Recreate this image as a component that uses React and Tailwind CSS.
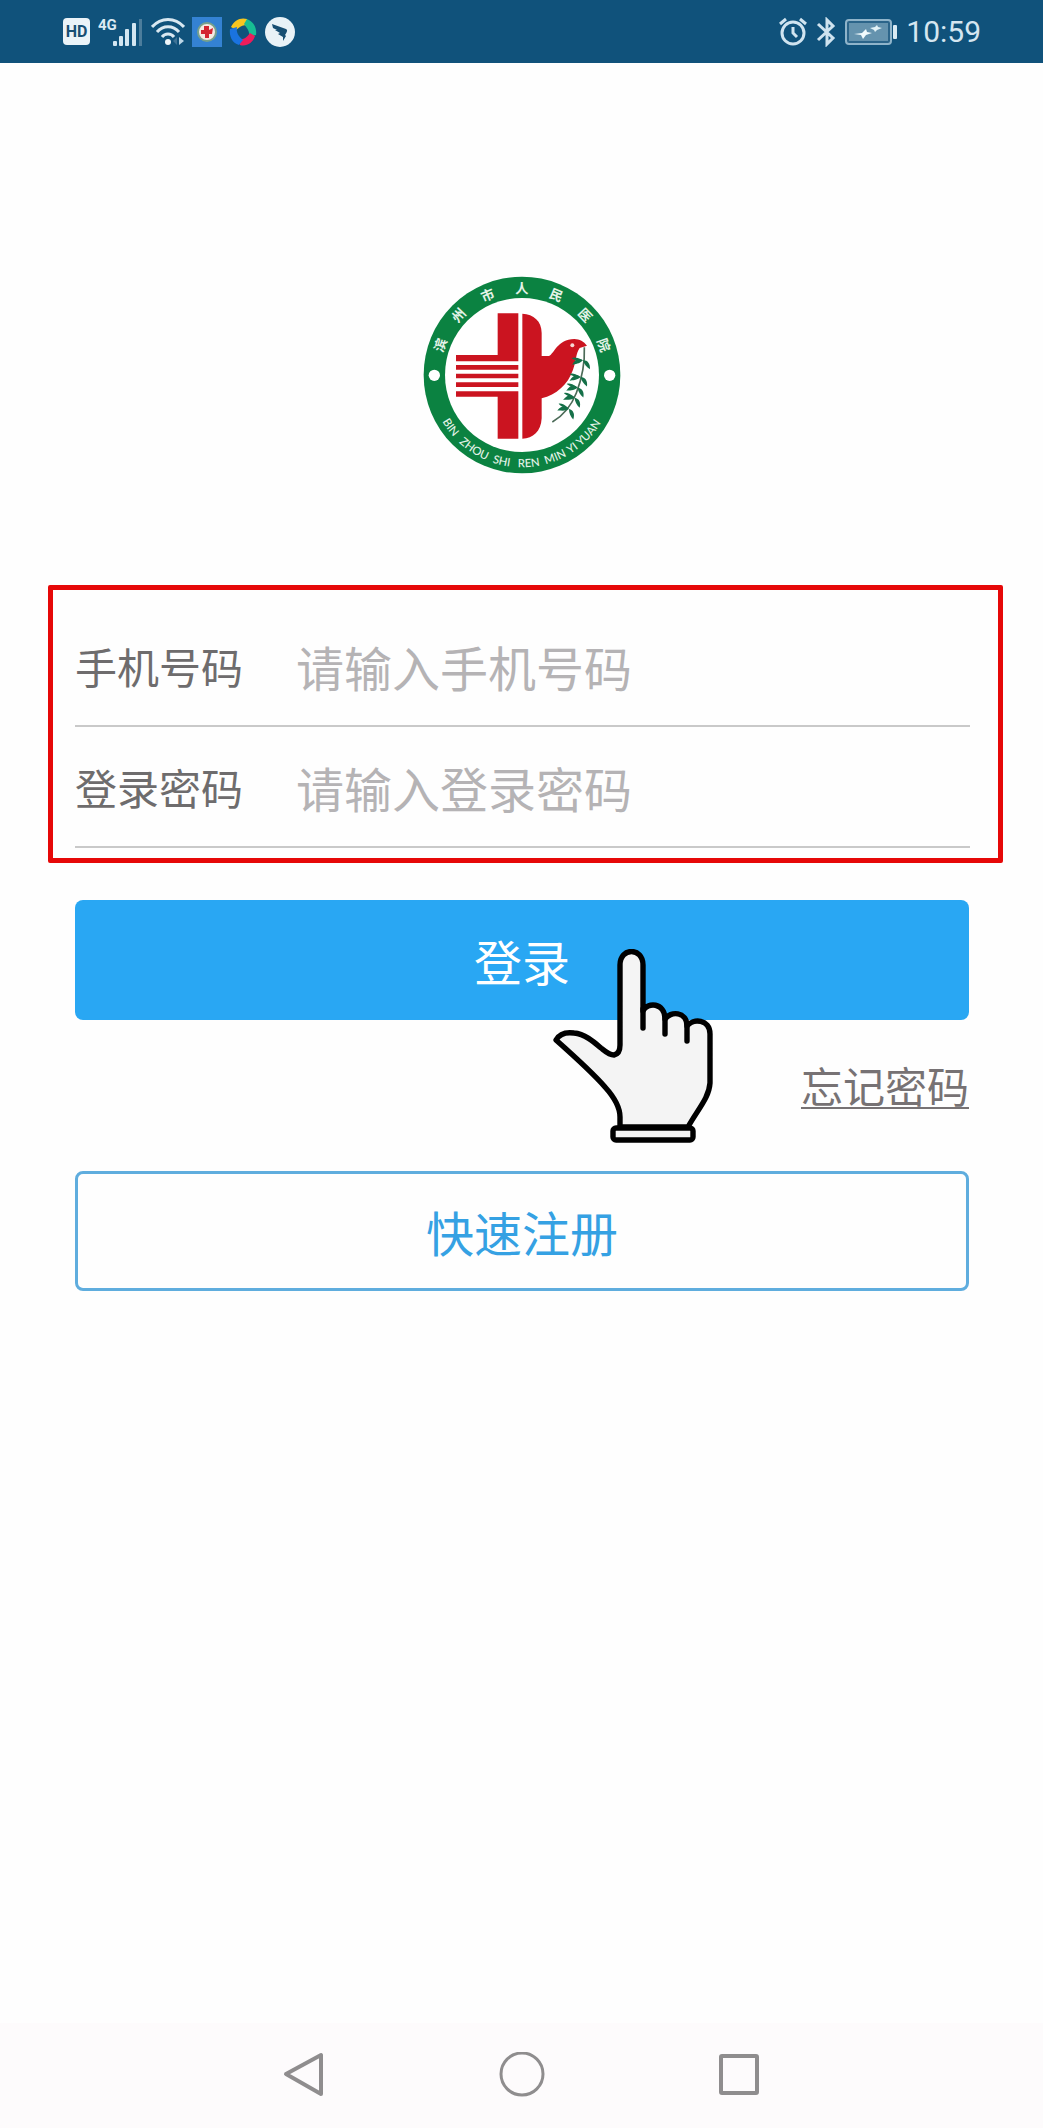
const RING_CHARS = ['滨', '州', '市', '人', '民', '医', '院']

const RING_WORDS = [
  { text: 'BIN', offset: 175 },
  { text: 'ZHOU', offset: 276 },
  { text: 'SHI', offset: 371 },
  { text: 'REN', offset: 456 },
  { text: 'MIN', offset: 541 },
  { text: 'YI', offset: 602 },
  { text: 'YUAN', offset: 672 },
]

const LEAVES = [
  [516, 288, 24],
  [509, 338, 28],
  [500, 370, 32],
  [491, 400, 36],
  [474, 434, 40],
]

function HospitalLogo() {
  return (
    <svg viewBox="36 35 594 594" className="size-[198px]" role="img" aria-label="滨州市人民医院">
      <circle cx="333" cy="332" r="295" fill="#0b8241" />
      <circle cx="333" cy="332" r="231" fill="#fff" />
      <circle cx="70" cy="333" r="17" fill="#fff" />
      <circle cx="596" cy="333" r="17" fill="#fff" />

      <g fill="#e4f3e8" fontSize="40" fontWeight="700" textAnchor="middle" className="font-['Noto_Sans_CJK_SC',sans-serif]">
        {RING_CHARS.map((char, i) => (
          <text key={char} x="333" y="86" transform={`rotate(${(i - 3) * 23.3} 333 332)`}>
            {char}
          </text>
        ))}
      </g>

      <path id="ring-bottom" d="M56 332A277 277 0 0 0 610 332" fill="none" />
      <text fill="#e4f3e8" fontSize="34" fontWeight="500" textAnchor="middle" className="font-['Lato',sans-serif]">
        {RING_WORDS.map((word) => (
          <textPath key={word.text} href="#ring-bottom" startOffset={word.offset}>{word.text}</textPath>
        ))}
      </text>

      <g fill="#cb1420">
        <path d="M260 147H322V291H135V272H260Z" />
        <path d="M135 302H322V316H135ZM135 328H322V342H135ZM135 354H322V368H135Z" />
        <path d="M135 381H322V523H260V397H135Z" />
        <path d="M334 148C368 150 392 170 392 206V275H414C430 268 438 226 490 224C506 225 518 231 528 244L506 251C494 268 496 290 486 316C470 362 436 390 392 402V462C390 502 366 522 334 523Z" />
      </g>
      <circle cx="484" cy="243" r="6" fill="#f7d9d4" />

      <path d="M520 249C522 300 510 350 496 386C482 422 460 452 424 473" fill="none" stroke="#4c6b58" strokeWidth="5" />
      <g fill="#157048">
        {LEAVES.map(([x, y, angle]) => (
          <g key={y} transform={`translate(${x} ${y}) rotate(${angle})`}>
            <path d="M0 0C-14 -4 -24 6 -24 26C-16 18 -6 16 0 0Z" />
            <path d="M0 0C12 -6 24 0 30 16C18 14 8 10 0 0Z" />
            <path d="M-3 0C-20 -2 -30 2 -34 8C-22 9 -12 8 -3 0Z" />
          </g>
        ))}
      </g>
    </svg>
  )
}

function SignalIcon() {
  return (
    <svg viewBox="0 0 46 30" className="w-[46px] h-[30px]" aria-label="4G">
      <text x="0" y="13" fontSize="15" fontWeight="700" fill="#dceaf3" className="font-['Roboto',sans-serif]">4G</text>
      <g fill="#d3e6f1">
        <rect x="15" y="24" width="4" height="5" rx="1" />
        <rect x="21" y="19" width="4" height="10" rx="1" />
        <rect x="27" y="12" width="4" height="17" rx="1" />
        <rect x="34" y="6" width="4" height="23" rx="1" />
      </g>
      <rect x="41" y="2" width="3" height="27" fill="#4c7d9c" />
    </svg>
  )
}

function WifiIcon() {
  return (
    <svg viewBox="0 0 34 28" className="w-[34px] h-7" aria-hidden="true">
      <g fill="none" stroke="#d9e8f1" strokeWidth="3">
        <path d="M1 9C10 -1 24 -1 33 9" />
        <path d="M6 14C12 7 22 7 28 14" />
        <path d="M11 19C14 15 20 15 23 19" />
      </g>
      <circle cx="17" cy="24" r="3" fill="#eef6fa" />
      <path d="M28 19L33 23L28 27Z" fill="#bcd6e6" />
      <path d="M26 19L22 23L26 27Z" fill="#3f7396" />
    </svg>
  )
}

function HospitalAppIcon() {
  return (
    <svg viewBox="0 0 30 30" className="size-[30px]" aria-hidden="true">
      <rect width="30" height="30" fill="#3482d3" />
      <circle cx="15" cy="15" r="9" fill="#f5e9e2" stroke="#77a18c" strokeWidth="2" />
      <path d="M12 9H17V13L21 11L20 17H17V21H13V17H9V13H12Z" fill="#d32530" />
    </svg>
  )
}

function PinwheelIcon() {
  return (
    <svg viewBox="0 0 28 28" className="size-7" aria-hidden="true">
      <path d="M2 9C5 2 12 -1 18 1L18 8C14 6 11 9 7 12Z" fill="#f7c51f" />
      <path d="M18 1C25 4 28 10 27 17L20 19C21 14 19 11 15 6Z" fill="#17bd93" />
      <path d="M26 18C24 25 17 29 11 27L10 21C15 22 18 19 21 15Z" fill="#ee1c5b" />
      <path d="M10 27C3 25 0 18 1 11L8 9C7 14 9 18 14 22Z" fill="#1a73e0" />
    </svg>
  )
}

function MessengerIcon() {
  return (
    <svg viewBox="0 0 32 32" className="size-8" aria-hidden="true">
      <circle cx="16" cy="16" r="15" fill="#e9f2f7" />
      <path d="M8 8L22 13C24 14 23 16 21 19L22 20L19 25L19 21L14 18L16 17L11 14L13 14L9 12Z" fill="#174e72" />
    </svg>
  )
}

function AlarmIcon() {
  return (
    <svg viewBox="0 0 28 30" className="w-7 h-[30px]" fill="none" stroke="#d0e4f0" aria-hidden="true">
      <circle cx="14" cy="16" r="11" strokeWidth="3" />
      <path d="M14 10V16L18 20" strokeWidth="3" />
      <path d="M1 7L7 2M21 2L27 7" strokeWidth="3" />
    </svg>
  )
}

function BluetoothIcon() {
  return (
    <svg viewBox="0 0 20 30" className="w-5 h-[30px]" fill="none" stroke="#cfe3ef" strokeWidth="3" aria-hidden="true">
      <path d="M2 7L17 21L11 27V3L17 9L2 23" />
    </svg>
  )
}

function BatteryIcon() {
  return (
    <svg viewBox="0 0 52 26" className="w-[52px] h-[26px]" aria-hidden="true">
      <rect x="1" y="1" width="45" height="24" rx="3" fill="#2c658a" stroke="#8fb4ca" strokeWidth="2" />
      <rect x="4" y="4" width="39" height="18" fill="#6593ae" />
      <path d="M9 15L17 14L21 10L22 13L27 14L21 16L18 20L16 16Z" fill="#f2fbfd" />
      <path d="M25 9L30 8L32 6L33 8L37 9L32 11L30 13L29 11Z" fill="#e3f3f7" />
      <rect x="48" y="6" width="4" height="14" rx="1" fill="#d9eaf3" />
    </svg>
  )
}

function StatusBar() {
  return (
    <header className="h-[63px] pl-[63px] pr-[62px] flex items-center justify-between bg-[#10527b]">
      <div className="flex items-center">
        <span className="size-[27px] mr-2 rounded bg-[#eaf3f8] text-[#174f73] text-base font-bold font-['Roboto',sans-serif] flex items-center justify-center">
          HD
        </span>
        <div className="flex items-center gap-[7px]">
          <SignalIcon />
          <WifiIcon />
          <HospitalAppIcon />
          <PinwheelIcon />
          <MessengerIcon />
        </div>
      </div>
      <div className="flex items-center gap-[9px]">
        <AlarmIcon />
        <BluetoothIcon />
        <BatteryIcon />
        <time className="text-[30px] leading-none text-[#d5e6f0] font-['Roboto',sans-serif]">10:59</time>
      </div>
    </header>
  )
}

function Field({ id, label, ...props }) {
  return (
    <div className="h-[121px] flex items-center border-b-2 border-[#c9c9c9]">
      <label htmlFor={id} className="w-[221px] shrink-0 text-[42px] leading-[60px] text-[#6e6c6d]">{label}</label>
      <input
        id={id}
        className="flex-1 min-w-0 h-[72px] bg-transparent text-[48px] outline-none placeholder:text-[#b5b3b5]"
        {...props}
      />
    </div>
  )
}

function PointingHand() {
  return (
    <svg
      viewBox="0 0 160 194"
      className="absolute left-[calc(50%+31px)] top-[49px] w-40 h-[194px] pointer-events-none"
      fill="#f4f4f4"
      stroke="#000"
      strokeWidth="5.4"
      strokeLinecap="round"
      strokeLinejoin="round"
      aria-hidden="true"
    >
      <path d="M67 178V168C67 158 61 148 52 138C40 124 21 107 3 91C7 84 14 83 21 84C32 85 41 93 48 99C53 103 56 106 61 106C66 105 67 101 67 96V16C67 -2 90 -2 90 16V62C94 53 112 53 112 70C117 62 134 62 134 77C140 69 157 70 157 85V134C156 149 145 160 135 178Z" />
      <path d="M90 60V79M112 68V85M134 75V92" fill="none" />
      <rect x="60" y="179" width="80" height="12" rx="3" />
    </svg>
  )
}

function NavBar() {
  return (
    <nav className="mt-auto h-[105px] flex items-center justify-center gap-[169px] bg-[#fdfbfc] text-[#8f8d8e]">
      <button type="button" aria-label="返回">
        <svg viewBox="0 0 48 48" className="size-12" fill="none" stroke="currentColor" strokeWidth="4" strokeLinejoin="round">
          <path d="M40 3V42L5 22Z" />
        </svg>
      </button>
      <button type="button" aria-label="主页">
        <svg viewBox="0 0 48 48" className="size-12" fill="none" stroke="currentColor" strokeWidth="3">
          <circle cx="24" cy="22" r="21" />
        </svg>
      </button>
      <button type="button" aria-label="最近任务">
        <svg viewBox="0 0 48 48" className="size-12" fill="none" stroke="currentColor" strokeWidth="4">
          <rect x="6" y="4" width="36" height="37" rx="1" />
        </svg>
      </button>
    </nav>
  )
}

export default function App() {
  return (
    <div className="min-h-screen flex flex-col bg-[#fefefe] font-['Noto_Sans_CJK_SC',sans-serif]">
      <StatusBar />
      <main>
        <div className="pt-[213px] flex justify-center">
          <HospitalLogo />
        </div>

        <form className="mt-[111px]" onSubmit={(e) => e.preventDefault()}>
          <div className="ml-12 mr-10 pt-4 pb-[10px] pl-[22px] pr-7 border-[5px] border-[#e60808] rounded-xs">
            <Field id="phone" label="手机号码" type="tel" placeholder="请输入手机号码" />
            <Field id="password" label="登录密码" type="password" placeholder="请输入登录密码" />
          </div>

          <div className="pl-[75px] pr-[74px] pt-[37px]">
            <div className="relative">
              <button type="submit" className="w-full h-[120px] rounded-lg bg-[#29a7f3] text-[48px] text-white">
                登录
              </button>
              <PointingHand />
            </div>
            <div className="pt-[35px] flex justify-end">
              <a href="#forgot" className="text-[42px] leading-[60px] text-[#777274] underline decoration-2 underline-offset-4">
                忘记密码
              </a>
            </div>
            <button type="button" className="mt-14 w-full h-[120px] rounded-lg border-3 border-[#5fadde] text-[48px] text-[#35a1e3]">
              快速注册
            </button>
          </div>
        </form>
      </main>
      <NavBar />
    </div>
  )
}
